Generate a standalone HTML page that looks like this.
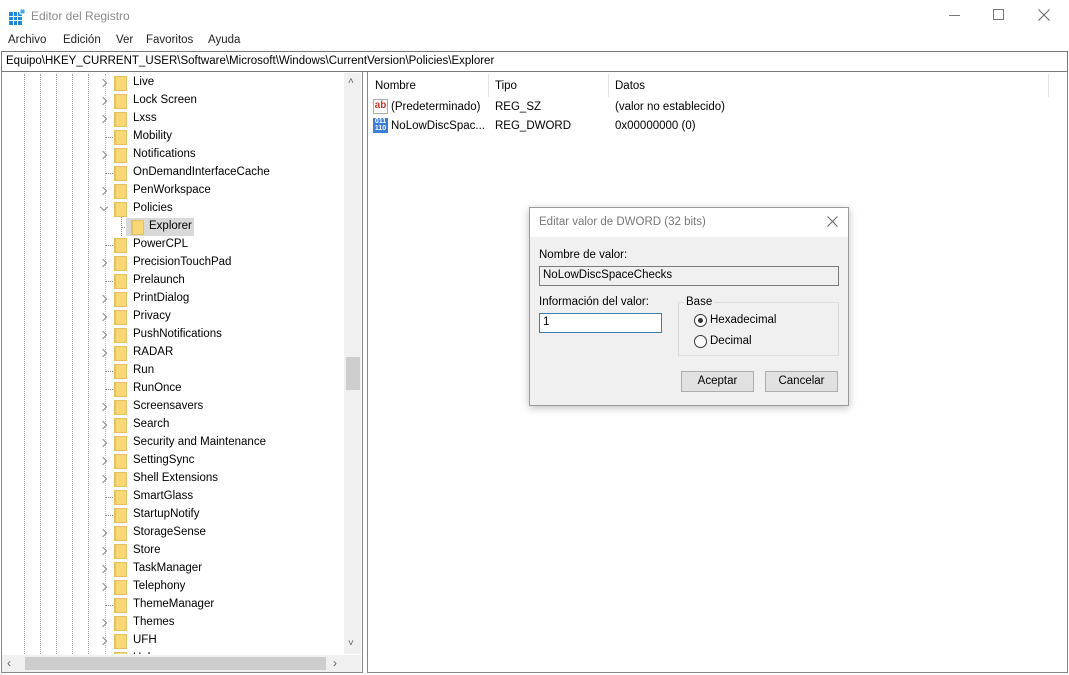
<!DOCTYPE html>
<html><head><meta charset="utf-8">
<style>
*{margin:0;padding:0;box-sizing:border-box}
body{width:1069px;height:675px;background:#fff;font-family:"Liberation Sans",sans-serif;font-size:11.5px;color:#000;position:relative;overflow:hidden}
.a{position:absolute;white-space:nowrap}
.row{position:absolute;left:0;height:18px;width:340px}
.fold{position:absolute;left:114px;top:2px;width:13px;height:15px;background:#f8d775;border:1px solid #e4c062;border-left-width:2px}
.lbl{position:absolute;left:133px;top:2px;font-size:11.5px}
.chev{position:absolute;left:100px;top:6px;width:6px;height:6px;border-right:1px solid #8a8a8a;border-top:1px solid #8a8a8a;transform:rotate(45deg)}
.stub{position:absolute;left:105px;top:9px;width:8px;border-top:1px dotted #888}
.vd{position:absolute;top:74px;height:580px;border-left:1px dotted #999}
</style></head><body>
<svg class="a" style="left:9px;top:9px" width="16" height="16" viewBox="0 0 16 16">
<rect x="0" y="3" width="13" height="13" fill="#1e8ad6"/>
<g stroke="#fff" stroke-width="1"><line x1="4.5" y1="3" x2="4.5" y2="16"/><line x1="8.5" y1="3" x2="8.5" y2="16"/><line x1="0" y1="7.5" x2="13" y2="7.5"/><line x1="0" y1="11.5" x2="13" y2="11.5"/></g>
<rect x="11" y="0" width="5" height="5" fill="#4aa6e8" stroke="#fff"/></svg>
<div class="a" style="left:31px;top:9px;font-size:12px;color:#8a8a8a">Editor del Registro</div>
<div class="a" style="left:949px;top:15px;width:11px;border-top:1px solid #777"></div>
<div class="a" style="left:993px;top:9px;width:11px;height:11px;border:1px solid #777"></div>
<svg class="a" style="left:1038px;top:9px" width="12" height="12"><path d="M0.5 0.5L11.5 11.5M11.5 0.5L0.5 11.5" stroke="#666" stroke-width="1"/></svg>
<div class="a" style="left:8px;top:34px;color:#222">Archivo</div>
<div class="a" style="left:63px;top:34px;color:#222">Edición</div>
<div class="a" style="left:116px;top:34px;color:#222">Ver</div>
<div class="a" style="left:146px;top:34px;color:#222">Favoritos</div>
<div class="a" style="left:208px;top:34px;color:#222">Ayuda</div>
<div class="a" style="left:1px;top:51px;width:1067px;height:21px;border:1px solid #7a7a7a"></div>
<div class="a" style="left:6px;top:55px">Equipo\HKEY_CURRENT_USER\Software\Microsoft\Windows\CurrentVersion\Policies\Explorer</div>
<div class="a" style="left:1px;top:72px;width:362px;height:601px;border:1px solid #888;border-top:none"></div>
<div class="vd" style="left:24px"></div><div class="vd" style="left:40px"></div><div class="vd" style="left:56px"></div><div class="vd" style="left:72px"></div><div class="vd" style="left:88px"></div>
<div class="vd" style="left:105px;border-color:#bbb"></div>
<div id="tree"></div>
<div class="a" style="left:344px;top:73px;width:17px;height:582px;background:#f0f0f0"></div>
<div class="a" style="left:346px;top:357px;width:14px;height:33px;background:#cdcdcd"></div>
<div class="a" style="left:348px;top:76px;color:#606060;font-size:10px">&#x2C4;</div>
<div class="a" style="left:348px;top:638px;color:#606060;font-size:10px">&#x2C5;</div>
<div class="a" style="left:2px;top:655px;width:359px;height:17px;background:#f0f0f0"></div>
<div class="a" style="left:25px;top:657px;width:301px;height:13px;background:#cdcdcd"></div>
<div class="a" style="left:7px;top:656px;color:#606060;font-size:12px">&lsaquo;</div>
<div class="a" style="left:333px;top:656px;color:#606060;font-size:12px">&rsaquo;</div>
<div class="a" style="left:367px;top:72px;width:701px;height:601px;border:1px solid #888;border-top:none"></div>
<div class="a" style="left:375px;top:80px">Nombre</div>
<div class="a" style="left:495px;top:80px">Tipo</div>
<div class="a" style="left:615px;top:80px">Datos</div>
<div class="a" style="left:488px;top:74px;height:23px;border-left:1px solid #e5e5e5"></div>
<div class="a" style="left:608px;top:74px;height:23px;border-left:1px solid #e5e5e5"></div>
<div class="a" style="left:1048px;top:74px;height:23px;border-left:1px solid #e5e5e5"></div>
<div class="a" style="left:373px;top:99px;width:15px;height:15px;border:1px solid #aaa;font-size:10px;color:#c0392b;line-height:12px;text-align:center;font-weight:bold">ab</div>
<div class="a" style="left:391px;top:101px">(Predeterminado)</div>
<div class="a" style="left:495px;top:101px">REG_SZ</div>
<div class="a" style="left:615px;top:101px">(valor no establecido)</div>
<div class="a" style="left:373px;top:118px;width:15px;height:15px;background:#3b7dd8;font-size:7px;color:#fff;line-height:7px;text-align:center;font-weight:bold">011<br>110</div>
<div class="a" style="left:391px;top:120px">NoLowDiscSpac...</div>
<div class="a" style="left:495px;top:120px">REG_DWORD</div>
<div class="a" style="left:615px;top:120px">0x00000000 (0)</div>
<div class="a" style="left:529px;top:207px;width:320px;height:199px;background:#f0f0f0;border:1px solid #9a9a9a;box-shadow:0 2px 8px rgba(0,0,0,.25)"></div>
<div class="a" style="left:530px;top:208px;width:318px;height:29px;background:#fff"></div>
<div class="a" style="left:539px;top:216px;color:#777">Editar valor de DWORD (32 bits)</div>
<svg class="a" style="left:827px;top:216px" width="11" height="11"><path d="M0.5 0.5L10.5 10.5M10.5 0.5L0.5 10.5" stroke="#666" stroke-width="1"/></svg>
<div class="a" style="left:539px;top:249px">Nombre de valor:</div>
<div class="a" style="left:539px;top:266px;width:300px;height:20px;background:#f0f0f0;border:1px solid #7a7a7a"></div>
<div class="a" style="left:543px;top:269px">NoLowDiscSpaceChecks</div>
<div class="a" style="left:539px;top:296px">Información del valor:</div>
<div class="a" style="left:539px;top:313px;width:123px;height:20px;background:#fff;border:1px solid #3c7fb1"></div>
<div class="a" style="left:543px;top:316px">1</div>
<div class="a" style="left:678px;top:302px;width:161px;height:54px;border:1px solid #dcdcdc"></div>
<div class="a" style="left:684px;top:296px;background:#f0f0f0;padding:0 2px">Base</div>
<div class="a" style="left:694px;top:314px;width:13px;height:13px;border-radius:50%;border:1px solid #333;background:#fff"></div>
<div class="a" style="left:698px;top:318px;width:5px;height:5px;border-radius:50%;background:#333"></div>
<div class="a" style="left:710px;top:314px">Hexadecimal</div>
<div class="a" style="left:694px;top:335px;width:13px;height:13px;border-radius:50%;border:1px solid #333;background:#fff"></div>
<div class="a" style="left:710px;top:335px">Decimal</div>
<div class="a" style="left:681px;top:371px;width:73px;height:21px;background:#e1e1e1;border:1px solid #adadad;text-align:center;line-height:19px">Aceptar</div>
<div class="a" style="left:765px;top:371px;width:73px;height:21px;background:#e1e1e1;border:1px solid #adadad;text-align:center;line-height:19px">Cancelar</div>
<script>
var items=[["Live",1],["Lock Screen",1],["Lxss",1],["Mobility",0],["Notifications",1],["OnDemandInterfaceCache",0],["PenWorkspace",1],["Policies",2],["Explorer",3],["PowerCPL",0],["PrecisionTouchPad",1],["Prelaunch",0],["PrintDialog",1],["Privacy",1],["PushNotifications",1],["RADAR",1],["Run",0],["RunOnce",0],["Screensavers",1],["Search",1],["Security and Maintenance",1],["SettingSync",1],["Shell Extensions",1],["SmartGlass",0],["StartupNotify",0],["StorageSense",1],["Store",1],["TaskManager",1],["Telephony",1],["ThemeManager",0],["Themes",1],["UFH",1],["Unknown",1]];
var h="";
items.forEach(function(it,i){
var t=74+i*18;
if(it[1]==3){
h+='<div class="row" style="top:'+t+'px"><div class="stub" style="left:121px"></div><div style="position:absolute;left:126px;top:0;width:68px;height:18px;background:#d9d9d9"></div><div class="fold" style="left:131px"></div><div class="lbl" style="left:149px">'+it[0]+'</div></div>';
return;}
h+='<div class="row" style="top:'+t+'px">';
if(it[1]==1)h+='<div class="chev"></div>';
else if(it[1]==2)h+='<div class="chev" style="transform:rotate(135deg);left:101px;top:4px"></div><div style="position:absolute;left:121px;top:14px;height:22px;border-left:1px dotted #888"></div>';
else h+='<div class="stub"></div>';
h+='<div class="fold"></div><div class="lbl">'+it[0]+'</div></div>';
});
document.getElementById("tree").innerHTML=h;
</script>
<div class="a" style="left:2px;top:654px;width:359px;height:1px;background:#fff"></div>
</body></html>
